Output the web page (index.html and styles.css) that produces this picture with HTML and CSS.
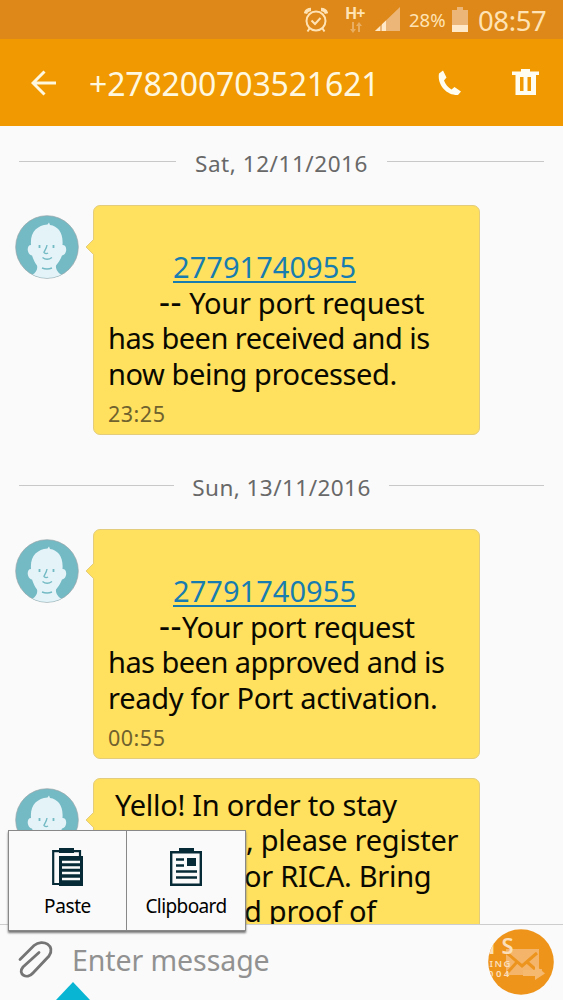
FILE: index.html
```html
<!DOCTYPE html>
<html lang="en">
<head>
<meta charset="utf-8">
<title>Messages</title>
<link rel="stylesheet" href="styles.css">
</head>
<body>
<svg class="defs" width="0" height="0" aria-hidden="true">
  <symbol id="face" viewBox="0 0 64 64">
    <clipPath id="disc"><circle cx="32" cy="32" r="31"/></clipPath>
    <circle cx="32" cy="32" r="31.3" fill="#74bac4" stroke="#9aa6ab" stroke-width=".7"/>
    <g clip-path="url(#disc)">
      <path d="M16 30C15 17 22 10.500 32.500 9.500L34 7.500L35 10C43 11 48.500 18 47.500 30C53 30 52 40 47 40.500C45.500 45 43 48 41 50.500C40.500 54 43 58 47 60L52 64H11L17 60C21 58 23 54 22 50.500C20 48 18.500 45 17 40.500C12 40 11 30 16 30Z" fill="#e3f3f8"/>
      <path d="M32 30C31.500 34 29 36 29 37.500Q31 39.500 33 38M27.500 42.500Q32 46 37 42.500M27 53Q32 55 37 53" fill="none" stroke="#74bac4" stroke-width="1.400"/>
      <path d="M24.500 30V33M38.500 30V33" stroke="#74bac4" stroke-width="1.800"/>
    </g>
  </symbol>
</svg>
<div class="phone">
  <div class="status">
    <svg class="alarm" width="24" height="26" viewBox="0 0 24 26" fill="none" stroke="#ffe3b5" stroke-width="2"><circle cx="12" cy="14" r="9.500"/><path d="M7.500 13.500L11 17L16.500 11M5.500 21.500L3.500 24.500M18.500 21.500L20.500 24.500"/><path d="M1.500 6.500Q2.500 2.500 7 2.500M22.500 6.500Q21.500 2.500 17 2.500" stroke-width="3.500"/></svg>
    <div class="net"><span>H+</span>
      <svg width="14" height="11" viewBox="0 0 14 11" fill="#e9ae62"><path d="M3 0h2v7h2L4 11L1 7h2zM9 10h2V4h2L10 0L7 4h2z"/></svg>
    </div>
    <svg class="signal" width="25" height="25" viewBox="0 0 25 25"><path d="M0 24L25 0V24Z" fill="#ecb678"/><path d="M0 24L5 19.200V24ZM7 24V17.300L11 13.400V24Z" fill="#ffe9c8"/></svg>
    <span class="percent">28%</span>
    <svg class="battery" width="16" height="25" viewBox="0 0 16 25"><path d="M0 3H5V0H11V3H16V25H0Z" fill="#ecb678"/><path d="M0 18H16V25H0Z" fill="#ffe9c8"/></svg>
    <span class="clock">08:57</span>
  </div>
  <header class="header">
    <svg class="back" width="26" height="26" viewBox="0 0 26 26" fill="none" stroke="#fff8e0" stroke-width="3"><path d="M13.500 1.500L2 13L13.500 24.500M2 13H25"/></svg>
    <h1>+278200703521621</h1>
    <svg class="call" width="24" height="26" viewBox="0 0 24 26"><path d="M1 3.500L5 .5L8.500 7.500L6 10.500C7.500 14.500 10 17.500 13.500 19.500L16.500 17L23 21.500L20 25C8 25.500-1 14 1 3.500Z" fill="#fffdf0"/></svg>
    <svg class="trash" width="27" height="26" viewBox="0 0 27 26"><path fill-rule="evenodd" d="M0 2.500H9V0H18V2.500H27V6H24V26H3.500V6H0ZM8 8V22H11.500V8ZM15.500 8V22H19V8Z" fill="#fffdf0"/></svg>
  </header>
  <main class="thread">
    <div class="date"><i></i><span>Sat, 12/11/2016</span><i></i></div>
    <section class="message">
      <svg class="avatar" width="64" height="64"><use href="#face"/></svg>
      <div class="bubble full">
        <svg class="tail" width="9" height="16" viewBox="0 0 9 16"><path d="M9 0L1 8L9 16" fill="#ffe05f" stroke="#e3cc7b"/></svg>
        <p class="link-line"><a>27791740955</a></p>
        <p class="indent"><span class="dash">--</span> Your port request</p>
        <p class="tight">has been received and is</p>
        <p class="snug">now being processed.</p>
        <time>23:25</time>
      </div>
    </section>
    <div class="date second"><i></i><span>Sun, 13/11/2016</span><i></i></div>
    <section class="message">
      <svg class="avatar" width="64" height="64"><use href="#face"/></svg>
      <div class="bubble full">
        <svg class="tail" width="9" height="16" viewBox="0 0 9 16"><path d="M9 0L1 8L9 16" fill="#ffe05f" stroke="#e3cc7b"/></svg>
        <p class="link-line"><a>27791740955</a></p>
        <p class="indent snug"><span class="dash">--</span>Your port request</p>
        <p class="tight">has been approved and is</p>
        <p>ready for Port activation.</p>
        <time>00:55</time>
      </div>
    </section>
    <section class="message last">
      <svg class="avatar" width="64" height="64"><use href="#face"/></svg>
      <div class="bubble partial">
        <svg class="tail" width="9" height="16" viewBox="0 0 9 16"><path d="M9 0L1 8L9 16" fill="#ffe05f" stroke="#e3cc7b"/></svg>
        <p class="c1">Yello! In order to stay</p>
        <p class="c2">, please register</p>
        <p class="c3">or RICA. Bring</p>
        <p class="c3">d proof of</p>
      </div>
    </section>
  </main>
  <footer class="compose">
    <svg class="clip" width="36" height="40" viewBox="0 0 36 40" fill="none" stroke="#757575" stroke-width="2.800" stroke-linecap="round"><path d="M2 19.500L16 5.500C25-2 38 6 31 16L15 33C9 40-1 34 5 27L21 12.500"/></svg>
    <span class="placeholder">Enter message</span>
    <svg class="send" width="66" height="66" viewBox="0 0 66 66">
      <clipPath id="button"><circle cx="33" cy="33" r="32.800"/></clipPath>
      <circle cx="33" cy="33" r="32.800" fill="#ee941b"/>
      <path d="M18 20H51V40H54V44H35V46H18Z" fill="#f4b56a"/>
      <path d="M19 24L34 37L49 24M20 43L29 33M39 33L47 40" fill="none" stroke="#ed941f" stroke-width="3"/>
      <path d="M35 41H47V36L57 44.500L47 51V47H35Z" fill="#f5b970"/>
      <g class="mark" clip-path="url(#button)" fill="#fbdfbb"><text x="-10" y="25" font-size="22">N</text><text x="13.500" y="25" font-size="22">S</text><text x="1.500" y="37.500" font-size="9.500" letter-spacing="1.500">ING</text><text x="0" y="48" font-size="9.500" letter-spacing="2.500">004</text></g>
    </svg>
    <svg class="handle" width="34" height="18" viewBox="0 0 34 18"><path d="M17 0L34 18H0Z" fill="#08b6d4"/></svg>
  </footer>
  <div class="menu">
    <div class="choice">
      <svg width="32" height="38" viewBox="0 0 32 38"><path d="M7 36H1.200V3.200H28V8" fill="none" stroke="#062b36" stroke-width="2.200"/><path d="M7 0H22V5H7ZM7 8H31V38H7Z" fill="#062b36"/><path d="M10 14H28M10 19.500H28M10 25H28M10 31H28" stroke="#fafafa" stroke-width="2.300"/></svg>
      <span class="paste">Paste</span>
    </div>
    <div class="choice">
      <svg width="32" height="38" viewBox="0 0 32 38"><path d="M1.200 4.200H30.800V36.800H1.200Z" fill="none" stroke="#062b36" stroke-width="2.400"/><path d="M9 0H24V5H9ZM17 10H26V18H17Z" fill="#062b36"/><path d="M6 11.500H14M6 17.500H14M6 23.500H27M6 29.500H27" stroke="#062b36" stroke-width="2.300"/></svg>
      <span class="clipboard">Clipboard</span>
    </div>
  </div>
</div>
</body>
</html>
```
FILE: styles.css
```css
* { box-sizing: border-box; }
body { margin: 0; font-family: "Noto Sans", sans-serif; background: #fafafa; }
.defs { position: absolute; }
svg { display: block; flex: none; }
.phone { position: relative; width: 563px; height: 1000px; overflow: hidden; display: flex; flex-direction: column; }
.status { height: 39px; flex: none; background: #dd8818; display: flex; align-items: flex-start; padding-left: 304px; color: #ffe3b5; }
.alarm { margin-top: 7px; }
.net { width: 22px; margin: 5px 0 0 17px; font-size: 16px; font-weight: 700; line-height: 16px; letter-spacing: -1px; }
.net span { display: block; }
.net svg { margin: 1px 0 0 4px; }
.signal { margin: 7px 0 0 8px; }
.percent { width: 42px; font-size: 18.5px; line-height: 26px; margin: 7px 0 0 9px; white-space: nowrap; }
.battery { margin: 7px 0 0 1px; }
.clock { font-size: 27.5px; line-height: 30px; letter-spacing: -.4px; margin: 6px 0 0 10px; white-space: nowrap; }
.header { height: 87px; flex: none; background: #f09900; display: flex; align-items: center; padding: 0 24px 0 31px; color: #fff8e0; }
h1 { font-size: 32px; font-weight: 400; line-height: 40px; letter-spacing: -.15px; width: 349px; margin: 2px 0 0 32px; white-space: nowrap; }
.call { margin-top: 1px; }
.trash { margin: 0 0 2px auto; }
.thread { height: 798px; flex: none; overflow: hidden; padding-top: 19px; }
.date { height: 37px; display: flex; align-items: center; justify-content: space-between; padding: 0 19px; color: #686868; font-size: 22.5px; letter-spacing: .55px; line-height: 37px; white-space: nowrap; }
.date i { width: 157px; height: 1px; background: #c8c8c8; margin-bottom: 4px; }
.date.second { margin-top: 34px; letter-spacing: .45px; }
.date.second i { width: 155px; }
.message { display: flex; padding-left: 15px; margin-top: 23px; }
.message.last { margin-top: 19px; }
.avatar { margin-top: 10px; }
.bubble { position: relative; width: 387px; margin-left: 14px; border: 1px solid #e3cc7b; border-radius: 7px; background: #ffe05f; font-size: 29px; line-height: 35.4px; letter-spacing: -.27px; }
.full { height: 230px; padding: 43.4px 14px 0; }
.partial { height: 180px; padding: 8px 14px 0; }
.tail { position: absolute; left: -9px; top: 33px; }
p { margin: 0; white-space: nowrap; color: #0a0900; }
.tight { letter-spacing: -.54px; }
.snug { letter-spacing: -.41px; }
.dash { display: inline-block; width: 23px; font-size: 34px; line-height: 20px; letter-spacing: .6px; }
.link-line { padding-left: 65px; letter-spacing: .05px; }
a { color: #177db0; text-decoration: underline; text-decoration-thickness: 2px; text-underline-offset: 3px; text-decoration-skip-ink: none; }
.indent { padding-left: 51px; }
time { display: block; color: #6f622e; font-size: 21.5px; letter-spacing: .5px; line-height: 30px; margin-top: 7.6px; }
.c1 { padding-left: 7px; }
.c2 { padding-left: 138px; }
.c3 { padding-left: 136px; }
.compose { position: relative; height: 76px; flex: none; border-top: 1px solid #cdcdcd; display: flex; padding-left: 18px; }
.clip { margin-top: 15px; }
.placeholder { font-size: 28.5px; line-height: 40px; letter-spacing: -.08px; color: #919191; margin: 15px 0 0 18px; white-space: nowrap; }
.send { margin: 4px 9px 0 auto; }
.mark { font-family: "Noto Sans", sans-serif; font-weight: 600; }
.handle { position: absolute; left: 56px; top: 57px; }
.menu { position: absolute; left: 8px; top: 830px; width: 238px; height: 101px; display: flex; border: 1px solid #888; background: #fafafa; box-shadow: 0 2px 2px #777; }
.choice { width: 117px; display: flex; flex-direction: column; align-items: center; padding-top: 17px; color: #000; font-size: 19px; line-height: 26px; }
.choice + .choice { border-left: 1px solid #888; width: 119px; }
.choice span { margin-top: 7px; }
.paste { letter-spacing: -.4px; }
.clipboard { letter-spacing: -.6px; }
```
